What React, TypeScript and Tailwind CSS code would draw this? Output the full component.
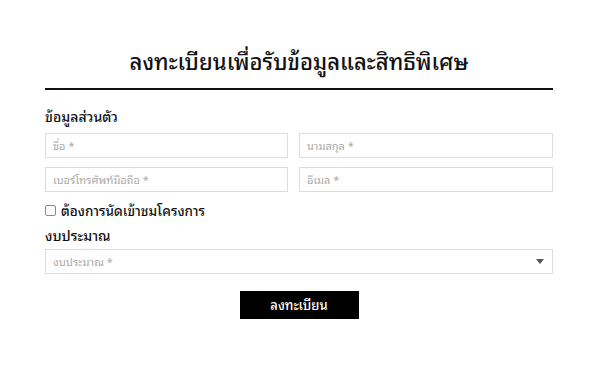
import React from "react";

export default function App() {
  const font = { fontFamily: '"Noto Sans Thai Looped", "Noto Sans Thai", "Noto Sans", "Liberation Sans", sans-serif' };
  const input =
    "h-[25px] w-full border border-[#dcdcdc] bg-white px-[7px] text-[11px] text-[#aaaaaa] flex items-center";
  return (
    <div className="w-[600px] h-[375px] bg-white" style={font}>
      <div className="pl-[45px] pr-[47px] pt-[42px] flex flex-col">
        <h1 className="text-center text-[22px] leading-[36px] font-medium text-[#111]">
          ลงทะเบียนเพื่อรับข้อมูลและสิทธิพิเศษ
        </h1>
        <div className="mt-[10px] h-[2px] bg-[#111]" />
        <div className="mt-[16px] text-[14px] leading-[20px] font-medium text-[#111]">ข้อมูลส่วนตัว</div>
        <div className="mt-[7px] grid grid-cols-[243px_1fr] gap-x-[11px] gap-y-[9px]">
          <div className={input}>ชื่อ *</div>
          <div className={input}>นามสกุล *</div>
          <div className={input}>เบอร์โทรศัพท์มือถือ *</div>
          <div className={input}>อีเมล *</div>
        </div>
        <div className="mt-[9px] flex items-center gap-[5px] h-[18px]">
          <div className="w-[11px] h-[11px] border border-[#8a8a8a] rounded-[2px] bg-white" />
          <span className="text-[13.5px] font-medium text-[#111]">ต้องการนัดเข้าชมโครงการ</span>
        </div>
        <div className="mt-[6px] text-[14px] leading-[20px] font-medium text-[#111]">งบประมาณ</div>
        <div className={input + " mt-[4px] justify-between"}>
          <span>งบประมาณ *</span>
          <svg width="8" height="5" viewBox="0 0 8 5" className="mr-[1px]">
            <path d="M0 0 L8 0 L4 5 Z" fill="#555" />
          </svg>
        </div>
        <div className="mt-[17px] flex justify-center">
          <button className="w-[119px] h-[28px] bg-black text-white text-[13px] font-medium">ลงทะเบียน</button>
        </div>
      </div>
    </div>
  );
}
